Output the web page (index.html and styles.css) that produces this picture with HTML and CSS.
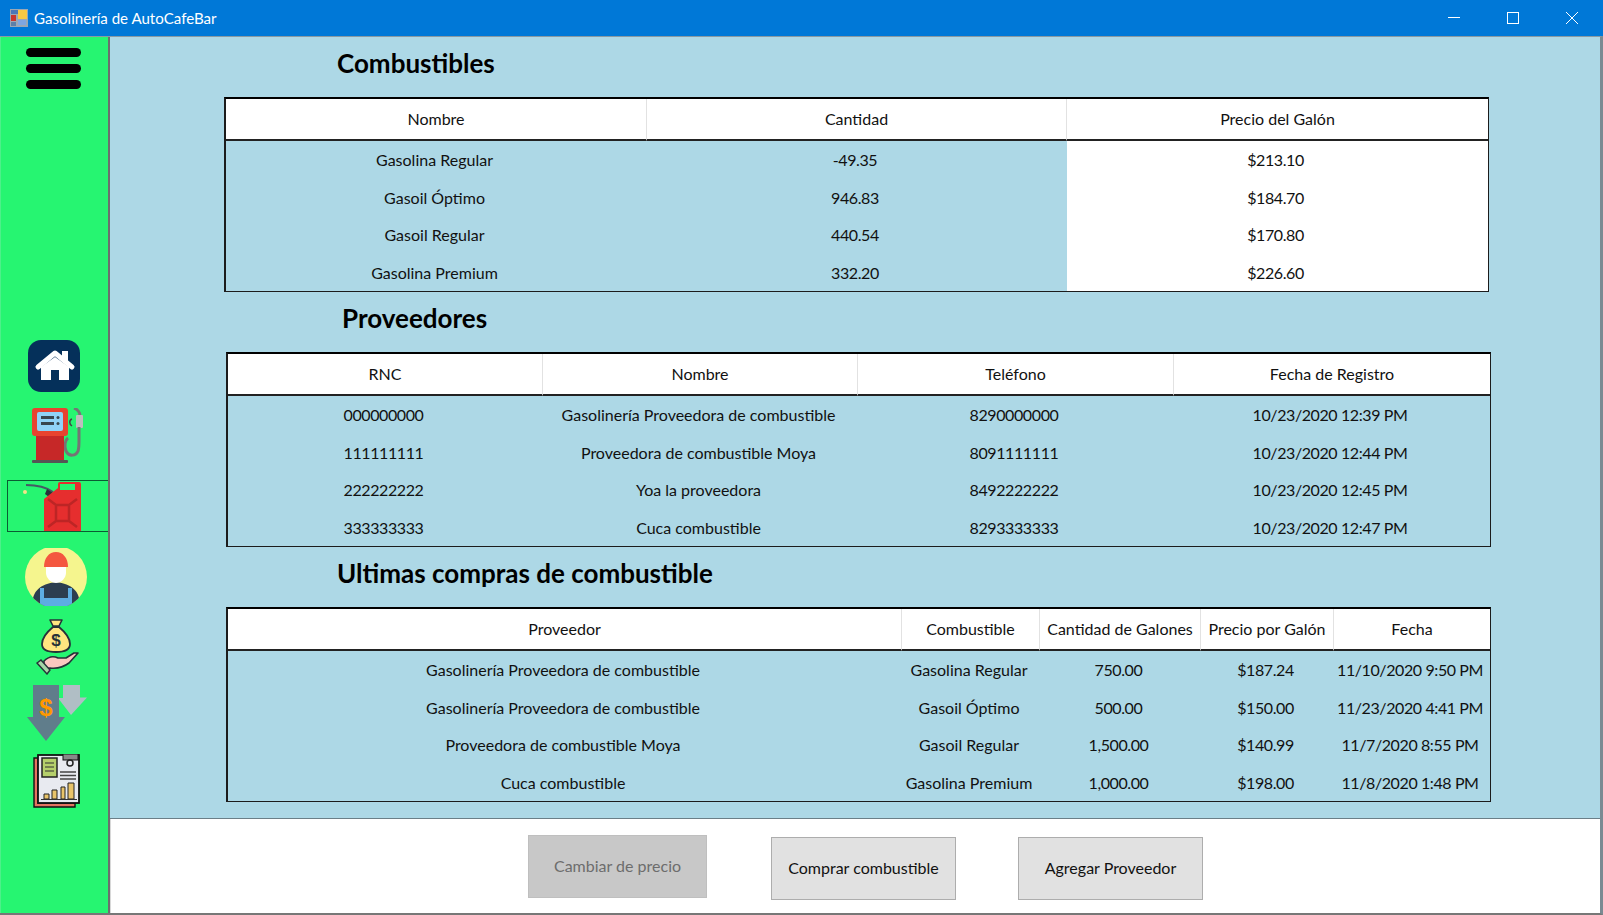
FILE: index.html
```html
<!DOCTYPE html>
<html lang="es">
<head>
  <meta charset="UTF-8" />
  <title>Gasolinería de AutoCafeBar</title>
  <link rel="stylesheet" href="styles.css">
</head>
<body>
  <header class="titlebar">
    <svg class="app-icon" viewBox="0 0 18 18" width="18" height="18">
      <rect x="0" y="0" width="18" height="18" fill="#9aa7b5"/>
      <rect x="1" y="1" width="7" height="4" fill="#4a78b8"/>
      <rect x="1" y="6" width="5" height="6" fill="#c8372d"/>
      <rect x="8" y="1" width="9" height="9" fill="#f6c945"/>
      <rect x="8" y="11" width="8" height="5" fill="#7fa6e0"/>
      <rect x="1" y="13" width="5" height="4" fill="#5c7fa8"/>
    </svg>
    <span class="app-title">Gasolinería de AutoCafeBar</span>
    <div class="win-controls">
      <svg viewBox="0 0 12 12" width="12" height="12"><path d="M0 5.5h12" stroke="#fff" fill="none"/></svg>
      <svg viewBox="0 0 12 12" width="12" height="12"><rect x=".5" y=".5" width="11" height="11" stroke="#fff" fill="none"/></svg>
      <svg viewBox="0 0 12 12" width="12" height="12"><path d="M0 0l12 12M12 0L0 12" stroke="#fff" fill="none"/></svg>
    </div>
  </header>

  <div class="window">
    <aside class="sidebar">
      <div class="menu-btn"><span></span><span></span><span></span></div>

      <svg class="icon icon-home" viewBox="0 0 52 52" width="52" height="52">
        <rect width="52" height="52" rx="13" fill="#05305a"/>
        <rect x="34" y="11" width="6" height="10" fill="#fff"/>
        <path d="M10 27L27 13l17 14" fill="none" stroke="#fff" stroke-width="5" stroke-linecap="round" stroke-linejoin="round"/>
        <path d="M13 27L27 17l14 10v13H31V30h-8v10H13z" fill="#fff"/>
      </svg>

      <svg class="icon icon-pump" viewBox="0 0 52 55" width="52" height="55">
        <path d="M36 30c-3 2-4 8-2 13 3 6 10 5 12 0 1-3 1-6 1-10" fill="none" stroke="#757575" stroke-width="3"/>
        <path d="M42 0c3 1 6 4 6 8" fill="none" stroke="#757575" stroke-width="3"/>
        <path d="M40 18c-3-2-3-6 0-7" fill="none" stroke="#444" stroke-width="1.5"/>
        <rect x="44" y="7" width="7" height="13" rx="1" fill="#bdbdbd"/>
        <rect x="45.500" y="19" width="3" height="14" fill="#757575"/>
        <rect x="4" y="25" width="28" height="27" fill="#c62828"/>
        <rect x="0" y="0" width="36" height="28" rx="3" fill="#e8432f"/>
        <rect x="5" y="4" width="26" height="19" rx="2" fill="#8fd3f7"/>
        <rect x="9" y="8" width="13" height="3" fill="#37474f"/>
        <rect x="9" y="14" width="13" height="3" fill="#37474f"/>
        <circle cx="26" cy="9.500" r="1.500" fill="#37474f"/>
        <circle cx="26" cy="15.500" r="1.500" fill="#37474f"/>
        <rect x="0" y="52" width="36" height="3" rx="1" fill="#555"/>
      </svg>

      <div class="icon-can-box">
        <svg viewBox="0 0 100 50" width="100" height="50">
          <path d="M18 4c10 0 20 2 27 7" fill="none" stroke="#455a64" stroke-width="2"/>
          <path d="M39 8l9 6-3 5-8-6z" fill="#263238"/>
          <circle cx="17" cy="11" r="2" fill="#f4e38a"/>
          <path fill-rule="evenodd" d="M36 18L50 7V3q0-2 2-2h19q2 0 2 2v47H36zM52 3v6h15V3z" fill="#e62e2e"/>
          <path d="M48 24h13v16H48zM40 18l8 6M69 18l-8 6M40 46l8-6M69 46l-8-6" fill="none" stroke="#bd2525" stroke-width="2.500"/>
        </svg>
      </div>

      <svg class="icon icon-worker" viewBox="0 0 62 58" width="62" height="58">
        <defs><clipPath id="workerClip"><circle cx="31" cy="29" r="31"/></clipPath></defs>
        <circle cx="31" cy="29" r="31" fill="#f5f58e"/>
        <g clip-path="url(#workerClip)">
          <path d="M7 58c0-15 8-22 24-24 16 2 24 9 24 24z" fill="#2c3e50"/>
          <path d="M15 58V40h4v10h24V40h4v18z" fill="#5dade2"/>
        </g>
        <path d="M21 19h20v6c0 5-5 10-10 10s-10-5-10-10z" fill="#fff"/>
        <path d="M19 19c0-9 5-15 12-15s12 6 12 15z" fill="#f4573f"/>
      </svg>

      <svg class="icon icon-money" viewBox="0 0 44 56" width="44" height="56">
        <path d="M15 1h12l-3 6h-6z" fill="#ffe680" stroke="#263238" stroke-width="1.600" stroke-linejoin="round"/>
        <path d="M18 8h6c6 5 11 11 11 17 0 6-6 8-14 8S7 31 7 25c0-6 5-12 11-17z" fill="#ffe680" stroke="#263238" stroke-width="1.800"/>
        <text x="21" y="27" class="money-sign">$</text>
        <path d="M9 42c5-5 10-5 14-3h8l8-5 4 0-9 10c-4 3-11 6-19 5l-6 1z" fill="#fbc8c0" stroke="#263238" stroke-width="1.600" stroke-linejoin="round"/>
        <path d="M2 44l4-3 9 10-3 4z" fill="#a5d6a7" stroke="#263238" stroke-width="1.400"/>
      </svg>

      <svg class="icon icon-arrows" viewBox="0 0 61 56" width="61" height="56">
        <path d="M37 0h17v12.500h7L45 30 32 13h5z" fill="#b0bec5"/>
        <path d="M7 0h26v32h6L20 56 1 32h6z" fill="#607d8b"/>
        <text x="20" y="31" class="arrow-sign">$</text>
      </svg>

      <svg class="icon icon-report" viewBox="0 0 48 54" width="48" height="54">
        <path d="M1 4h4v45h37v4H1z" fill="#e57360" stroke="#111" stroke-width="1.400"/>
        <rect x="5" y="1" width="41" height="48" fill="#e8eaf0" stroke="#111" stroke-width="1.800"/>
        <rect x="9" y="4" width="15" height="19" fill="#b5cf6b" stroke="#222" stroke-width="1.500"/>
        <path d="M12 9h9M12 13h9M12 17h9" stroke="#333" stroke-width="1.200"/>
        <rect x="30" y="0" width="15" height="6" fill="#888" stroke="#111"/>
        <circle cx="37" cy="9" r="3" fill="none" stroke="#222" stroke-width="1.500"/>
        <path d="M27 18h16M27 21.500h16M27 25h16" stroke="#444" stroke-width="1.400"/>
        <path d="M11 40h5v5h-5zM19 36h5v9h-5zM28 33h4v12h-4zM35 29h6v16h-6z" fill="#e9c46a" stroke="#222"/>
        <path d="M8 45.500h36" stroke="#333"/>
      </svg>
    </aside>

    <div class="main">
      <div class="content">
        <section class="block">
          <h2 class="block-title title-fuel">Combustibles</h2>
          <table class="grid grid-fuel">
            <colgroup><col class="c-fuel"><col class="c-fuel"><col></colgroup>
            <thead><tr><th>Nombre</th><th>Cantidad</th><th>Precio del Galón</th></tr></thead>
            <tbody>
              <tr><td>Gasolina Regular</td><td class="num">-49.35</td><td class="num white">$213.10</td></tr>
              <tr><td>Gasoil Óptimo</td><td class="num">946.83</td><td class="num white">$184.70</td></tr>
              <tr><td>Gasoil Regular</td><td class="num">440.54</td><td class="num white">$170.80</td></tr>
              <tr><td>Gasolina Premium</td><td class="num">332.20</td><td class="num white">$226.60</td></tr>
            </tbody>
          </table>
        </section>

        <section class="block">
          <h2 class="block-title title-prov">Proveedores</h2>
          <table class="grid grid-shift">
            <colgroup><col class="c-rnc"><col class="c-name"><col class="c-tel"><col></colgroup>
            <thead><tr><th>RNC</th><th>Nombre</th><th>Teléfono</th><th>Fecha de Registro</th></tr></thead>
            <tbody>
              <tr><td class="num">000000000</td><td>Gasolinería Proveedora de combustible</td><td class="num">8290000000</td><td class="num">10/23/2020 12:39 PM</td></tr>
              <tr><td class="num">111111111</td><td>Proveedora de combustible Moya</td><td class="num">8091111111</td><td class="num">10/23/2020 12:44 PM</td></tr>
              <tr><td class="num">222222222</td><td>Yoa la proveedora</td><td class="num">8492222222</td><td class="num">10/23/2020 12:45 PM</td></tr>
              <tr><td class="num">333333333</td><td>Cuca combustible</td><td class="num">8293333333</td><td class="num">10/23/2020 12:47 PM</td></tr>
            </tbody>
          </table>
        </section>

        <section class="block">
          <h2 class="block-title title-last">Ultimas compras de combustible</h2>
          <table class="grid grid-shift">
            <colgroup><col class="c-prov"><col class="c-comb"><col class="c-gal"><col class="c-price"><col></colgroup>
            <thead><tr><th>Proveedor</th><th>Combustible</th><th>Cantidad de Galones</th><th>Precio por Galón</th><th>Fecha</th></tr></thead>
            <tbody>
              <tr><td>Gasolinería Proveedora de combustible</td><td>Gasolina Regular</td><td class="num">750.00</td><td class="num">$187.24</td><td class="num">11/10/2020 9:50 PM</td></tr>
              <tr><td>Gasolinería Proveedora de combustible</td><td>Gasoil Óptimo</td><td class="num">500.00</td><td class="num">$150.00</td><td class="num">11/23/2020 4:41 PM</td></tr>
              <tr><td>Proveedora de combustible Moya</td><td>Gasoil Regular</td><td class="num">1,500.00</td><td class="num">$140.99</td><td class="num">11/7/2020 8:55 PM</td></tr>
              <tr><td>Cuca combustible</td><td>Gasolina Premium</td><td class="num">1,000.00</td><td class="num">$198.00</td><td class="num">11/8/2020 1:48 PM</td></tr>
            </tbody>
          </table>
        </section>
      </div>

      <footer class="actions">
        <button class="btn btn-off">Cambiar de precio</button>
        <button class="btn btn-buy">Comprar combustible</button>
        <button class="btn btn-add">Agregar Proveedor</button>
      </footer>
    </div>
  </div>
</body>
</html>
```

FILE: styles.css
```css
* {
  box-sizing: border-box;
}

body {
  margin: 0;
  width: 1603px;
  height: 915px;
  overflow: hidden;
  font-family: 'Lato', 'Noto Sans', sans-serif;
  font-size: 16px;
  color: #111;
  background: #7a7a7a;
}

.titlebar {
  height: 36px;
  background: #0078d7;
  color: #fff;
  display: flex;
  align-items: center;
  padding-left: 10px;
}

.app-title {
  margin-left: 6px;
  font-size: 15.1px;
}

.win-controls {
  margin-left: auto;
  display: flex;
  gap: 47px;
  padding-right: 25px;
}

.win-controls svg {
  display: block;
}

.window {
  height: 879px;
  display: flex;
  border-top: 1px solid #8a9aa2;
  border-right: 3px solid #7a8a92;
  border-bottom: 2px solid #777;
}

.sidebar {
  width: 110px;
  height: 100%;
  flex-shrink: 0;
  background: #26f571;
  border-left: 1px solid #4df08a;
  border-right: 2px solid #6e6e6e;
  display: flex;
  flex-direction: column;
  align-items: flex-start;
}

.menu-btn {
  margin: 11px 0 0 25px;
  width: 55px;
  display: flex;
  flex-direction: column;
  gap: 7px;
}

.menu-btn span {
  height: 9px;
  background: #000;
  border-radius: 5px;
}

.icon {
  display: block;
  flex-shrink: 0;
}

.icon-home { margin: 251px 0 0 27px; }
.icon-pump { margin: 16px 0 0 31px; }
.icon-worker { margin: 16px 0 0 24px; }
.icon-money { margin: 13px 0 0 34px; }
.icon-arrows { margin: 10px 0 0 25px; }
.icon-report { margin: 13px 0 0 32px; }

.icon-can-box {
  margin: 17px 0 0 6px;
  width: 101px;
  height: 52px;
  border: 1px solid #0b5c33;
  border-right: 0;
}

.icon-can-box svg {
  display: block;
}

.money-sign {
  font: bold 17px 'Liberation Sans', sans-serif;
  text-anchor: middle;
  fill: #263238;
}

.arrow-sign {
  font: bold 24px 'Liberation Sans', sans-serif;
  text-anchor: middle;
  fill: #ff9800;
}

.main {
  flex: 1;
  display: flex;
  flex-direction: column;
}

.content {
  height: 782px;
  background: #add8e6;
  border-bottom: 1px solid #6b7f88;
}

.block-title {
  margin: 0;
  height: 60px;
  padding-top: 6px;
  font-size: 26px;
  line-height: 40px;
  font-weight: 700;
  color: #000;
}

.title-fuel { padding-left: 227px; }
.title-prov { padding-left: 232px; }
.title-last { padding-left: 227px; }

.grid {
  width: 1265px;
  height: 195px;
  margin-left: 114px;
  table-layout: fixed;
  border-collapse: separate;
  border-spacing: 0;
  border: 1px solid #1c1c1c;
  border-top: 2px solid #000;
  border-left-width: 2px;
}

.grid-shift {
  margin-left: 116px;
}

.c-fuel { width: 420px; }
.c-rnc { width: 315px; }
.c-name { width: 315px; }
.c-tel { width: 316px; }
.c-prov { width: 674px; }
.c-comb { width: 138px; }
.c-gal { width: 161px; }
.c-price { width: 133px; }

.grid-fuel .c-fuel:first-child { width: 421px; }

.grid th {
  height: 42px;
  padding: 0 0 2px;
  font-weight: 400;
  background: #fff;
  border-bottom: 2px solid #222;
  border-right: 1px solid #e2e2e2;
}

.grid th:last-child {
  border-right: 0;
}

.grid td {
  height: 37.5px;
  padding: 0 4px 0 0;
  text-align: center;
  white-space: nowrap;
}

.grid td.num {
  letter-spacing: -0.4px;
}

.grid td.white {
  background: #fff;
}

.actions {
  flex: 1;
  background: #fff;
  border-left: 1px solid #d8d8d8;
  display: flex;
  align-items: flex-start;
  padding-left: 417px;
}

.btn {
  font: inherit;
  height: 63px;
  width: 185px;
  margin-top: 18px;
  padding-bottom: 3px;
  color: #111;
  background: #e1e1e1;
  border: 1px solid #adadad;
}

.btn-off {
  width: 179px;
  margin-top: 16px;
  color: #6d6d6d;
  background: #c8c8c8;
  border-color: #bfbfbf;
}

.btn-buy {
  margin-left: 64px;
}

.btn-add {
  margin-left: 62px;
}
```
